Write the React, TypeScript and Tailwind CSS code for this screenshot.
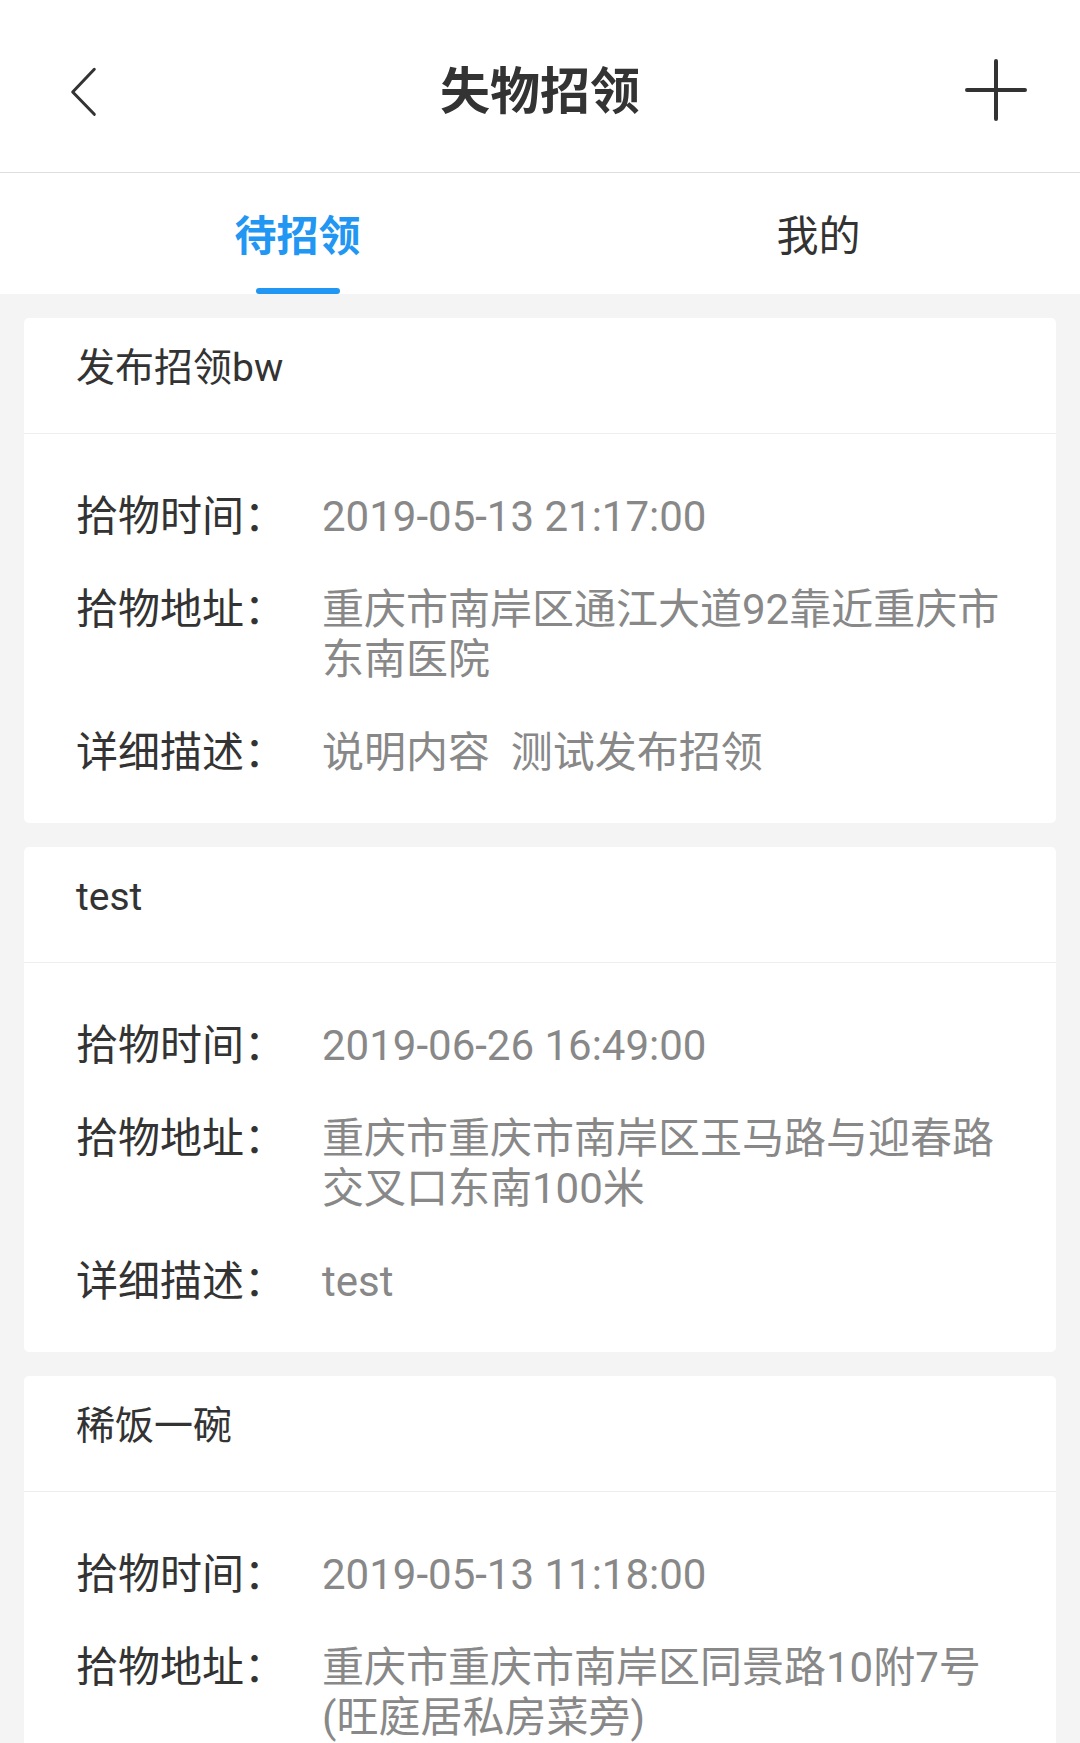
import React from "react";

type Item = {
  title: string;
  time: string;
  address: string;
  desc?: string;
};

const items: Item[] = [
  {
    title: "发布招领bw",
    time: "2019-05-13 21:17:00",
    address: "重庆市南岸区通江大道92靠近重庆市东南医院",
    desc: "说明内容\u00a0\u00a0测试发布招领",
  },
  {
    title: "test",
    time: "2019-06-26 16:49:00",
    address: "重庆市重庆市南岸区玉马路与迎春路交叉口东南100米",
    desc: "test",
  },
  {
    title: "稀饭一碗",
    time: "2019-05-13 11:18:00",
    address: "重庆市重庆市南岸区同景路10附7号(旺庭居私房菜旁)",
    desc: "稀饭一碗",
  },
];

function Row({ label, value }: { label: string; value: string }) {
  return (
    <div className="flex text-[42px] leading-[50px]">
      <div className="w-[246px] shrink-0 text-[#333333]">{label}</div>
      <div className="flex-1 text-[#888888]">{value}</div>
    </div>
  );
}

function Card({ item }: { item: Item }) {
  return (
    <div className="bg-white rounded-[5px] shrink-0">
      <div className="h-[116px] pl-[52px] pt-[25px] text-[39px] leading-[50px] text-[#333333] border-b border-[#eeeeee]">
        {item.title}
      </div>
      <div className="pl-[52px] pr-[40px] pt-[58px] pb-[45px] flex flex-col gap-[43px]">
        <Row label="拾物时间：" value={item.time} />
        <Row label="拾物地址：" value={item.address} />
        {item.desc && <Row label="详细描述：" value={item.desc} />}
      </div>
    </div>
  );
}

export default function App() {
  return (
    <div className="w-[1080px] h-[1743px] overflow-hidden bg-[#f4f4f4] font-['Roboto','Noto_Sans_CJK_SC',sans-serif]">
      <div className="h-[173px] bg-white border-b border-[#dedede] grid grid-cols-[1fr_auto_1fr] items-center pt-[8px]">
        <div className="justify-self-start ml-[70px] mt-[4px]">
          <svg width="30" height="52" viewBox="0 0 30 52" fill="none">
            <path
              d="M24.3 3.3 L2.7 26 L24.3 48.3"
              stroke="#333333"
              strokeWidth="3"
              strokeLinecap="round"
              strokeLinejoin="round"
            />
          </svg>
        </div>
        <div className="mt-[4px] text-[50px] leading-[60px] font-bold text-[#333333]">失物招领</div>
        <div className="justify-self-end mr-[52px]">
          <svg width="64" height="64" viewBox="0 0 64 64" fill="none">
            <path d="M32 3 V61 M3 32 H61" stroke="#333333" strokeWidth="4" strokeLinecap="round" />
          </svg>
        </div>
      </div>
      <div className="h-[121px] bg-white flex pl-[37px]">
        <div className="w-[521px] flex flex-col items-center">
          <div className="flex-1 flex items-center pt-[12px] text-[42px] leading-[50px] font-bold text-[#2196f3]">
            待招领
          </div>
          <div className="w-[84px] h-[6px] rounded-full bg-[#2196f3]" />
        </div>
        <div className="w-[521px] flex flex-col items-center">
          <div className="flex-1 flex items-center pt-[12px] text-[42px] leading-[50px] text-[#333333]">
            我的
          </div>
          <div className="h-[6px]" />
        </div>
      </div>
      <div className="pt-[24px] px-[24px] flex flex-col gap-[24px]">
        {items.map((it, i) => (
          <Card key={i} item={it} />
        ))}
      </div>
    </div>
  );
}
